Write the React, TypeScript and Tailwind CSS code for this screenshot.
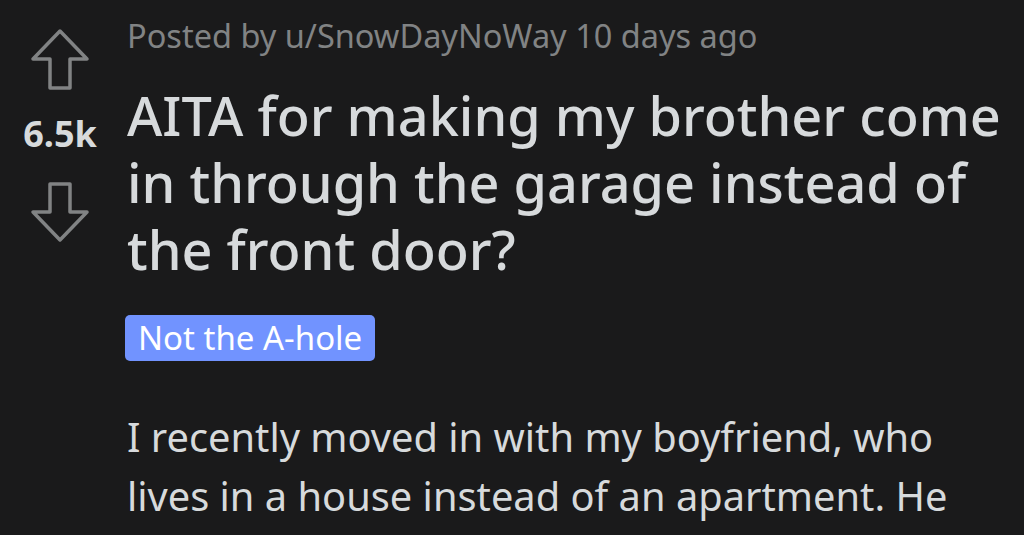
import React from 'react';

const ArrowUp = () => (
  <svg width="60" height="64" viewBox="0 0 60 64" fill="none">
    <path
      d="M30 3 L57 31 L40 31 L40 60 L20 60 L20 31 L3 31 Z"
      stroke="#818384"
      strokeWidth="3.5"
      strokeLinejoin="round"
    />
  </svg>
);

const ArrowDown = () => (
  <svg width="60" height="64" viewBox="0 0 60 64" fill="none">
    <path
      d="M20 3 L40 3 L40 31 L57 31 L30 59 L3 31 L20 31 Z"
      stroke="#818384"
      strokeWidth="3.5"
      strokeLinejoin="round"
    />
  </svg>
);

export default function App() {
  return (
    <div
      className="w-[1024px] h-[535px] overflow-hidden bg-[#1a1a1b] flex"
      style={{ fontFamily: '"Noto Sans", "Open Sans", sans-serif' }}
    >
      {/* Vote column */}
      <div className="w-[120px] flex flex-col items-center pt-[28px] shrink-0">
        <ArrowUp />
        <div className="mt-[22px] text-[36px] leading-[40px] font-bold text-[#d7dadc]">6.5k</div>
        <div className="mt-[27px]">
          <ArrowDown />
        </div>
      </div>

      {/* Post content */}
      <div className="flex-1 pl-[7px] pr-[20px]">
        <div className="pt-[17px] text-[32.5px] leading-[37px] text-[#818384]">
          Posted by u/SnowDayNoWay 10 days ago
        </div>
        <h1 className="mt-[28px] text-[54px] leading-[67px] font-medium text-[#d7dadc]">
          AITA for making my brother come in through the garage instead of the front door?
        </h1>
        <div className="mt-[32px] flex -ml-[2px]">
          <span className="h-[46px] flex items-center px-[13px] rounded-[5px] bg-[#7193ff] text-white text-[33px]">
            Not the A-hole
          </span>
        </div>
        <p className="mt-[46px] max-w-[840px] text-[39.8px] leading-[59px] text-[#d7dadc]">
          I recently moved in with my boyfriend, who lives in a house instead of an apartment. He
        </p>
      </div>
    </div>
  );
}
